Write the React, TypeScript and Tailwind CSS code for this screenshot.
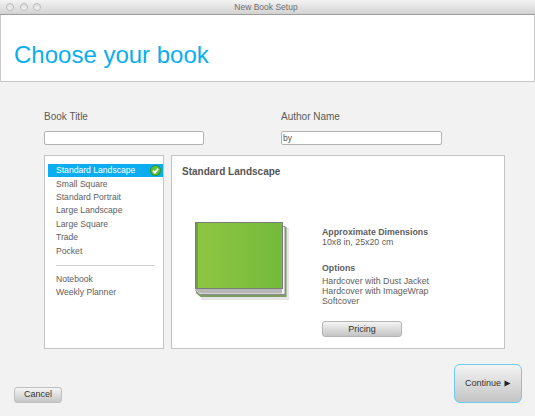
const sizes = ['Standard Landscape', 'Small Square', 'Standard Portrait', 'Large Landscape', 'Large Square', 'Trade', 'Pocket']
const options = ['Hardcover with Dust Jacket', 'Hardcover with ImageWrap', 'Softcover']

function TrafficLight() {
  return <span className="block w-[8px] h-[8px] rounded-full border border-[#bcbcbc] bg-gradient-to-b from-[#dcdcdc] to-[#f4f4f4]" />
}

function CheckBadge() {
  return (
    <svg width="11" height="11" viewBox="0 0 11 11" className="shrink-0">
      <circle cx="5.5" cy="5.5" r="5.5" fill="#2f8f2a" />
      <circle cx="5.5" cy="5.5" r="4.5" fill="#5cc23c" />
      <path d="M3 5.6 L4.9 7.6 L8.2 3.6" fill="none" stroke="#ffffff" strokeWidth="1.8" />
    </svg>
  )
}

function BookArt() {
  return (
    <svg width="96" height="80" viewBox="0 0 96 80" className="shrink-0">
      <defs>
        <linearGradient id="cover" x1="0" x2="1" y1="0" y2="0">
          <stop offset="0" stopColor="#8fc642" />
          <stop offset="1" stopColor="#74ba3c" />
        </linearGradient>
      </defs>
      <path d="M6 6 H94 V78 H6 Z" fill="#000000" opacity="0.1" />
      <path d="M87 5 H91.5 V75 H5.5 L1 71 V66 H87 Z" fill="#7a9f5e" />
      <path d="M87 4.5 H90 V72.5 H5 L1 69 V66 H87 Z" fill="#f4f4f4" stroke="#8a8a8a" />
      <path d="M1.5 66 H87 V71.5 H6 L1.5 69 Z" fill="#b6b6b6" />
      <rect x="0.5" y="0.5" width="87" height="66" fill="url(#cover)" stroke="#7b7b7b" />
      <rect x="1" y="1" width="2" height="65" fill="#6f9f48" />
    </svg>
  )
}

export default function App() {
  return (
    <div className="w-[535px] h-[416px] overflow-hidden flex flex-col bg-[#f2f2f2] font-['Liberation_Sans',Arial,sans-serif] text-[#5e5e5e]">
      <div className="h-[15px] shrink-0 flex items-center relative bg-gradient-to-b from-[#f4f4f4] to-[#d2d2d2] border-b border-[#9d9d9d]">
        <div className="flex gap-[5.5px] pl-[6px]">
          <TrafficLight />
          <TrafficLight />
          <TrafficLight />
        </div>
        <span className="flex-1 text-center text-[8.5px] text-[#6e6e6e] pr-[4px] -ml-[40px]">New Book Setup</span>
      </div>

      <div className="h-[67px] shrink-0 flex items-end pb-[11px] pl-[13px] bg-white border-x border-b border-[#c8c8c8]">
        <h1 className="text-[24px] leading-[30px] text-[#0aaef0]">Choose your book</h1>
      </div>

      <div className="pl-[44px] pr-[30px] pt-[29px]">
        <div className="flex">
          <label className="w-[237px] block">
            <span className="block text-[10px] leading-[12px] text-[#5a5a5a] mb-[8px]">Book Title</span>
            <input className="block w-[160px] h-[14px] bg-white border border-[#b2b2b2] rounded-[2px] outline-0" />
          </label>
          <label className="block">
            <span className="block text-[10px] leading-[12px] text-[#5a5a5a] mb-[8px]">Author Name</span>
            <input defaultValue="by" className="block w-[161px] h-[14px] bg-white border border-[#b2b2b2] rounded-[2px] outline-0 text-[8.5px] px-[1px] text-[#555555]" />
          </label>
        </div>

        <div className="flex gap-[7px] mt-[10px] h-[194px]">
          <div className="w-[120px] bg-white border border-[#c4c4c4] pt-[8px] pl-[3px] text-[8.6px]">
            {sizes.map((s, i) => (
              <div key={s} className={`h-[13.4px] flex items-center pl-[8px] pr-[2px] justify-between ${i == 0 ? 'bg-[#0aaef0] text-white' : ''}`}>
                <span>{s}</span>
                {i == 0 && <CheckBadge />}
              </div>
            ))}
            <div className="border-t border-[#cfcfcf] ml-[8px] mr-[8px] mt-[7px] mb-[7px]" />
            <div className="h-[13.4px] flex items-center pl-[8px]">Notebook</div>
            <div className="h-[13.4px] flex items-center pl-[8px]">Weekly Planner</div>
          </div>

          <div className="w-[334px] bg-white border border-[#c4c4c4] pl-[10px] pt-[10px] text-[8.8px] leading-[10px]">
            <h2 className="text-[10px] leading-[12px] font-bold text-[#555555]">Standard Landscape</h2>
            <div className="flex mt-[39px]">
              <div className="ml-[13px] w-[127px] pt-[5px]">
                <BookArt />
              </div>
              <div>
                <div className="pt-[11px] leading-[9px] font-bold">Approximate Dimensions</div>
                <div>10x8 in, 25x20 cm</div>
                <div className="font-bold mt-[16px] mb-[3px]">Options</div>
                {options.map((o) => (
                  <div key={o}>{o}</div>
                ))}
                <button className="block mt-[15px] w-[80px] h-[16px] rounded-[3px] border border-[#b5b5b5] bg-gradient-to-b from-[#f4f4f4] to-[#c4c4c4] text-[9px] text-[#333333]">
                  Pricing
                </button>
              </div>
            </div>
          </div>
        </div>
      </div>

      <div className="flex justify-between items-end pl-[14px] pr-[13px] mt-[15px]">
        <button className="w-[48px] h-[16px] rounded-[3px] border border-[#c0c0c0] bg-gradient-to-b from-[#f6f6f6] to-[#c6c6c6] text-[9px] text-[#333333]">
          Cancel
        </button>
        <button className="w-[68px] h-[39px] rounded-[6px] border-[1.5px] border-[#6ccbf0] bg-gradient-to-b from-[#f4f4f4] to-[#c4c4c4] text-[9px] text-[#333333] flex items-center justify-center gap-[3px]">
          Continue
          <svg width="7" height="7" viewBox="0 0 7 7">
            <path d="M0.5 0.5 L6.5 3.5 L0.5 6.5 Z" fill="#222222" />
          </svg>
        </button>
      </div>
    </div>
  )
}
